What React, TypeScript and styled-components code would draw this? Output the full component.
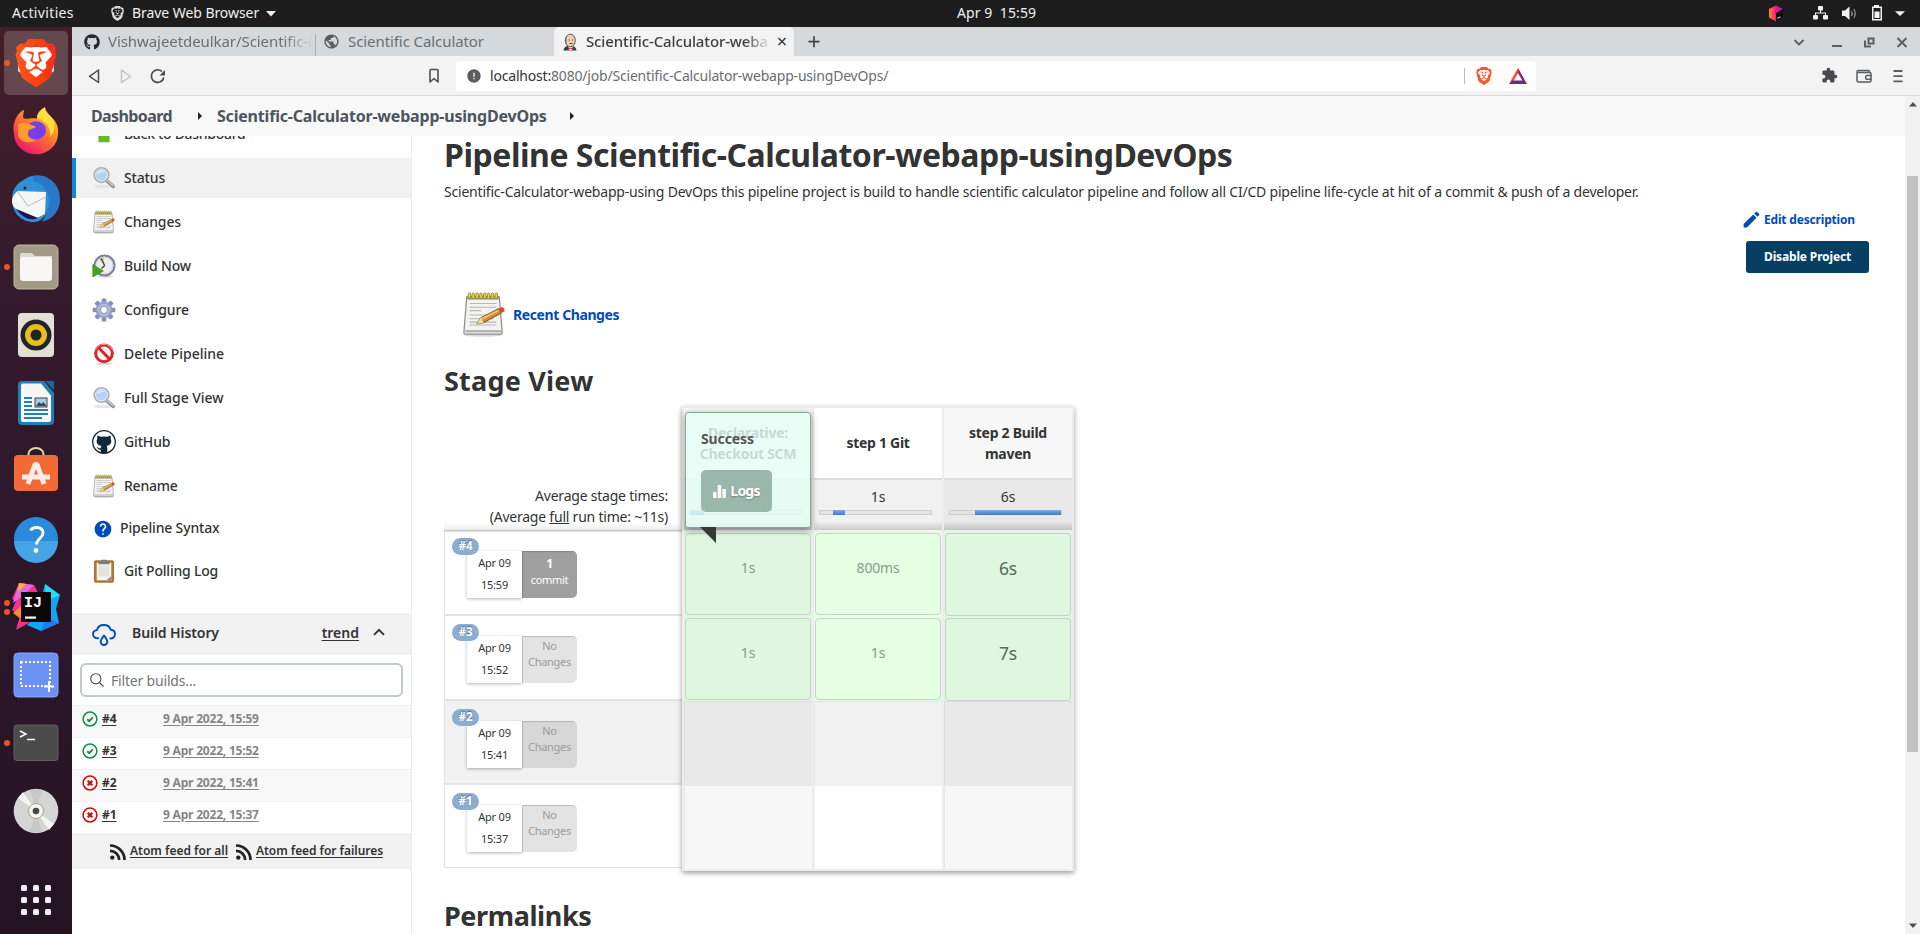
import React from 'react';
import styled, { createGlobalStyle, css } from 'styled-components';
import { SiBrave } from 'react-icons/si';
import { FaGithub } from 'react-icons/fa';
import { MdExtension, MdEdit, MdError, MdHelp, MdPublic } from 'react-icons/md';

const GlobalStyle = createGlobalStyle`
  * { box-sizing: border-box; }
  body {
    margin: 0;
    overflow: hidden;
    background: #fff;
    color: #333;
    font-family: 'Noto Sans', 'Open Sans', sans-serif;
    font-size: 14px;
  }
  svg { display: block; flex: none; }
`;

/* ---------- desktop shell ---------- */

const Screen = styled.div`
  width: 1920px;
  height: 934px;
  display: flex;
  flex-direction: column;
  overflow: hidden;
`;

const TopBar = styled.header`
  height: 27px;
  flex: none;
  display: grid;
  grid-template-columns: 1fr auto 1fr;
  align-items: center;
  background: #1d1d1d;
  color: #f0f0f0;
  font-size: 14px;
  line-height: 25px;
  white-space: pre;
`;

const TopLeft = styled.div`
  display: flex;
  align-items: center;
  padding-left: 12px;
`;

const Activities = styled.span`
  width: 98px;
  padding-bottom: 2px;
  letter-spacing: 0.36px;
`;

const AppName = styled.span`
  margin: 0 7px 0 7px;
  padding-bottom: 2px;
  letter-spacing: -0.06px;
`;

const Clock = styled.div`
  padding: 0 0 2px 73px;
  letter-spacing: 0.1px;
`;

const Tray = styled.div`
  display: flex;
  justify-content: flex-end;
  padding-right: 10px;
`;

const Desktop = styled.div`
  flex: 1;
  display: flex;
  min-height: 0;
`;

const Dock = styled.nav`
  width: 72px;
  flex: none;
  display: flex;
  flex-direction: column;
  gap: 4px;
  padding: 4px 4px 0;
  background: linear-gradient(#441e29 0%, #351b2c 28%, #2d172b 60%, #241421 100%);
`;

const DockItem = styled.div<{ $active?: boolean; $last?: boolean }>`
  position: relative;
  width: 64px;
  height: 64px;
  border-radius: 5px;
  margin-top: ${p => (p.$last ? '21px' : '0')};
  background: ${p => (p.$active ? '#65474f' : 'transparent')};
`;

const Dots = styled.div`
  position: absolute;
  left: 0;
  top: 0;
  height: 64px;
  display: flex;
  flex-direction: column;
  justify-content: center;
  gap: 3px;
`;

const Dot = styled.i`
  width: 6px;
  height: 6px;
  border-radius: 50%;
  background: #e95420;
`;

/* ---------- browser chrome ---------- */

const Browser = styled.div`
  flex: 1;
  min-width: 0;
  display: flex;
  flex-direction: column;
`;

const TabStrip = styled.div`
  height: 29px;
  flex: none;
  display: flex;
  align-items: center;
  background: #d5d9dc;
`;

const Tab = styled.div<{ $active?: boolean; $w: number; $pad: number }>`
  width: ${p => p.$w}px;
  height: 29px;
  padding-left: ${p => p.$pad}px;
  display: flex;
  align-items: center;
  font-size: 15px;
  color: #6b6e71;
  ${p =>
    p.$active &&
    css`
      background: #f3f3f3;
      color: #3b3d3f;
      font-weight: 500;
      border-radius: 5px 5px 0 0;
    `}
`;

const TabTitle = styled.span<{ $w: number; $fade?: boolean; $ls: number }>`
  width: ${p => p.$w}px;
  padding: 0 0 2px 8px;
  overflow: hidden;
  white-space: nowrap;
  letter-spacing: ${p => p.$ls}px;
  ${p =>
    p.$fade &&
    css`
      mask-image: linear-gradient(90deg, #000 86%, transparent 100%);
    `}
`;

const TabDivider = styled.i`
  width: 1px;
  height: 22px;
  margin-top: 7px;
  background: #a9adb0;
`;

const WindowControls = styled.div`
  margin-left: auto;
  width: 130px;
`;

const Toolbar = styled.div`
  height: 40px;
  flex: none;
  display: flex;
  align-items: center;
  background: #f3f3f3;
  border-bottom: 1px solid #d6d8da;
`;

const NavButtons = styled.div`
  width: 384px;
`;

const AddressBar = styled.div`
  width: 1080px;
  height: 30px;
  display: flex;
  align-items: center;
  padding-left: 10px;
  border-radius: 4px;
  background: #fff;
  color: #6a6d70;
  font-size: 14px;
  letter-spacing: -0.19px;
`;

const Url = styled.span`
  margin-left: 8px;
  b { font-weight: 400; color: #333; }
`;

const Shields = styled.div`
  margin-left: auto;
`;

const ToolbarEnd = styled.div`
  margin: 0 16px 0 auto;
`;

/* ---------- page ---------- */

const Viewport = styled.div`
  flex: 1;
  min-height: 0;
  display: flex;
`;

const Page = styled.div`
  flex: 1;
  min-width: 0;
  display: flex;
  flex-direction: column;
  background: #fff;
`;

const Breadcrumbs = styled.div`
  height: 40px;
  flex: none;
  display: flex;
  align-items: center;
  padding-left: 19px;
  background: #f8f8f8;
  color: #4d545d;
  font-size: 16px;
  font-weight: 700;
`;

const Crumb = styled.span<{ $w: number; $ls: number }>`
  width: ${p => p.$w}px;
  white-space: nowrap;
  letter-spacing: ${p => p.$ls}px;
`;

const CrumbArrow = styled.i`
  width: 0;
  height: 0;
  border: 4px solid transparent;
  border-left-color: #222;
  border-right: 0;
  margin: 0 15px 0 25px;
`;

const ScrollTrack = styled.div`
  width: 15px;
  flex: none;
  display: flex;
  flex-direction: column;
  align-items: center;
  background: #f1f1f1;
  padding: 6px 0;
`;

const ScrollThumb = styled.div`
  width: 11px;
  height: 576px;
  margin-top: 69px;
  margin-bottom: auto;
  background: #c1c1c1;
`;

const Columns = styled.div`
  flex: 1;
  min-height: 0;
  display: flex;
  overflow: hidden;
`;

const SidePanel = styled.aside`
  width: 340px;
  flex: none;
  border-right: 1px solid #ededed;
`;

const TaskList = styled.div`
  display: flex;
  flex-direction: column;
  gap: 4px;
  margin-top: -22px;
`;

const Task = styled.div<{ $active?: boolean; $small?: boolean; $ls?: number }>`
  height: ${p => (p.$small ? 37 : 40)}px;
  display: flex;
  align-items: center;
  gap: ${p => (p.$small ? 7 : 8)}px;
  padding-left: ${p => (p.$small ? 17 : 16)}px;
  border-left: 4px solid ${p => (p.$active ? '#0b8adb' : 'transparent')};
  background: ${p => (p.$active ? '#f1f1f1' : 'transparent')};
  font-weight: 500;
  letter-spacing: ${p => p.$ls ?? -0.15}px;
`;

const TaskLabel = styled.span`
  padding-bottom: 2px;
`;

const HistoryHead = styled.div`
  height: 42px;
  margin-top: 22px;
  display: flex;
  align-items: center;
  padding: 0 26px 4px 20px;
  background: #f1f1f1;
  font-weight: 600;
  svg:first-child { margin-top: 5px; }
`;

const HistoryTitle = styled.span`
  margin-left: 16px;
  letter-spacing: -0.08px;
`;

const Trend = styled.a`
  margin-left: auto;
  margin-right: 14px;
  text-decoration: underline;
  text-underline-offset: 2px;
`;

const FilterBox = styled.div`
  width: 323px;
  height: 34px;
  margin: 8px 0 8px 8px;
  display: flex;
  align-items: center;
  gap: 7px;
  padding-left: 8px;
  border: 2px solid #bfcacf;
  border-radius: 6px;
  color: #757575;
  letter-spacing: -0.18px;
`;

const BuildRow = styled.div<{ $odd?: boolean }>`
  height: 32px;
  display: flex;
  padding: 5px 0 0 10px;
  border-top: 1px solid #f1f1f1;
  background: ${p => (p.$odd ? '#f8f8f8' : '#fff')};
  font-size: 12px;
  font-weight: 700;
  line-height: 16px;
`;

const BuildNo = styled.a`
  width: 61px;
  margin-left: 4px;
  letter-spacing: -0.1px;
  text-decoration: underline;
  text-underline-offset: 2px;
`;

const BuildDate = styled.a`
  color: #858585;
  letter-spacing: -0.2px;
  text-decoration: underline;
  text-underline-offset: 2px;
`;

const Feeds = styled.div`
  height: 36px;
  display: flex;
  align-items: center;
  padding-left: 38px;
  background: #f1f1f1;
  font-size: 12px;
  font-weight: 600;
  white-space: nowrap;
  svg { margin-top: 2px; }
`;

const Feed = styled.a<{ $w: number; $ls: number }>`
  width: ${p => p.$w}px;
  margin: 0 8px 2px 4px;
  letter-spacing: ${p => p.$ls}px;
  text-decoration: underline;
  text-underline-offset: 2px;
`;

const Main = styled.main`
  flex: 1;
  min-width: 0;
  display: flex;
  flex-direction: column;
  padding-left: 32px;
`;

const Title = styled.h1`
  margin: 0;
  font-size: 32px;
  line-height: 38px;
  font-weight: 700;
  letter-spacing: -0.47px;
`;

const Description = styled.p`
  margin: 8px 0 7px;
  line-height: 20px;
  letter-spacing: -0.205px;
`;

const PageActions = styled.div`
  width: 161px;
  align-self: flex-end;
`;

const EditLink = styled.a`
  height: 20px;
  display: flex;
  align-items: center;
  gap: 2px;
  color: #004bb8;
  font-size: 12px;
  font-weight: 700;
  letter-spacing: -0.18px;
  svg { margin-left: -3px; }
`;

const DisableButton = styled.button`
  display: block;
  width: 123px;
  height: 32px;
  margin: 12px 0 0 2px;
  padding: 0 0 1px;
  border: 0;
  border-radius: 3px;
  background: #073f63;
  color: #fff;
  font: 700 12px 'Noto Sans', sans-serif;
  letter-spacing: -0.15px;
`;

const RecentChanges = styled.a`
  height: 48px;
  margin: 17px 0 26px;
  padding-left: 17px;
  display: flex;
  align-items: center;
  gap: 6px;
  color: #004bb8;
  font-weight: 700;
  letter-spacing: -0.4px;
`;

const SectionTitle = styled.h2<{ $ls: number }>`
  margin: 0;
  font-size: 27px;
  line-height: 34px;
  font-weight: 700;
  letter-spacing: ${p => p.$ls}px;
`;

/* ---------- stage view ---------- */

const StageView = styled.section`
  display: flex;
  margin: 8px 0 28px;
  height: 465px;
`;

const RunColumn = styled.div`
  width: 238px;
`;

const AverageLabel = styled.div`
  height: 125px;
  padding: 79px 14px 0 0;
  text-align: right;
  line-height: 21px;
  letter-spacing: -0.22px;
  border-bottom: 1px solid #c4c4c4;
  background: linear-gradient(#fff 94%, #ececec);
`;

const Run = styled.div<{ $h: number; $pad: number; $shaded?: boolean }>`
  position: relative;
  height: ${p => p.$h}px;
  padding: ${p => p.$pad}px 0 0 22px;
  display: flex;
  align-items: flex-start;
  border: 1px solid #e3e3e3;
  border-width: 1px 0 1px 1px;
  background: ${p => (p.$shaded ? '#f1f1f1' : '#fff')};
`;

const RunBadge = styled.span<{ $top: number }>`
  position: absolute;
  left: 7px;
  top: ${p => p.$top}px;
  width: 27px;
  height: 17px;
  border-radius: 9px;
  background: #8aadd1;
  color: #fff;
  text-align: center;
  font-size: 11.5px;
  line-height: 16px;
  font-weight: 700;
  text-shadow: 0 -1px 1px rgba(0, 0, 0, 0.4);
`;

const RunDate = styled.div`
  width: 55px;
  height: 47px;
  padding-top: 1px;
  background: #fff;
  box-shadow: 0 1px 3px rgba(0, 0, 0, 0.3);
  text-align: center;
  font-size: 11px;
  line-height: 22px;
  letter-spacing: -0.2px;
`;

const Commits = styled.div<{ $has?: boolean; $dark?: boolean }>`
  width: 55px;
  height: 47px;
  padding-top: ${p => (p.$has ? 5 : 2)}px;
  border-radius: 0 5px 5px 0;
  background: ${p => (p.$has ? '#9f9f9f' : p.$dark ? '#d7d7d7' : '#e3e3e3')};
  box-shadow: inset 1px 1px 1px rgba(0, 0, 0, 0.18);
  color: ${p => (p.$has ? '#fff' : '#9a9a9a')};
  text-align: center;
  font-size: 11px;
  line-height: 16px;
  letter-spacing: -0.3px;
  b { font-size: 12px; }
`;

const StageGrid = styled.div`
  position: relative;
  width: 392px;
  height: 465px;
  padding: 2px;
  display: grid;
  grid-template-columns: repeat(3, 128px);
  grid-template-rows: 70px 53px 85px 85px 84px 84px;
  column-gap: 2px;
  background: #ededed;
  box-shadow: 0 2px 5px rgba(0, 0, 0, 0.4);
`;

const StageHead = styled.div<{ $odd?: boolean }>`
  padding-bottom: 1px;
  display: flex;
  align-items: center;
  justify-content: center;
  text-align: center;
  white-space: pre;
  line-height: 21px;
  font-weight: 700;
  letter-spacing: -0.28px;
  background: ${p => (p.$odd ? '#f7f7f7' : '#fff')};
`;

const StageAverage = styled.div<{ $odd?: boolean }>`
  padding-top: 7px;
  border-top: 2px solid #dedede;
  border-bottom: 1px solid #f0f0f0;
  line-height: 20px;
  text-align: center;
  background: linear-gradient(transparent 82%, rgba(0, 0, 0, 0.16)), ${p => (p.$odd ? '#e9e9e9' : '#f1f1f1')};
`;

const Meter = styled.div`
  width: 113px;
  height: 5px;
  margin: 3px 0 0 5px;
  display: flex;
  background: #e4e4e4;
  border: 1px solid #cdcdcd;
`;

const MeterBar = styled.i<{ $from: number; $len: number }>`
  height: 5px;
  margin: -1px 0 0 ${p => p.$from}px;
  width: ${p => p.$len}px;
  background: linear-gradient(#86abdc, #4178c4);
`;

const Cell = styled.div<{ $odd?: boolean; $kind: 'ok' | 'shaded' | 'plain' }>`
  padding: 2px 1px 1px;
  background: ${p =>
    p.$kind === 'ok' ? (p.$odd ? '#def7de' : '#e5ffe3')
    : p.$kind === 'shaded' ? (p.$odd ? '#e9e9e9' : '#f1f1f1')
    : p.$odd ? '#f7f7f7' : '#fff'};
  ${p =>
    p.$kind !== 'ok' &&
    css`
      border: 1px solid rgba(0, 0, 0, 0.05);
      border-width: 1px 0 0 1px;
    `}
`;

const Result = styled.div<{ $slow?: boolean }>`
  height: ${p => (p.$slow ? 83 : 82)}px;
  padding-bottom: 14px;
  display: flex;
  align-items: center;
  justify-content: center;
  border: 1px solid rgba(200, 190, 205, 0.75);
  border-radius: 4px;
  color: ${p => (p.$slow ? '#5b665b' : '#8b998b')};
  font-size: ${p => (p.$slow ? 17.5 : 14)}px;
  letter-spacing: -0.2px;
`;

const Popover = styled.div`
  position: absolute;
  left: 3px;
  top: 6px;
  width: 126px;
  height: 116px;
  padding: 16px 0 0 15px;
  border: 1px solid #7bb08e;
  border-radius: 3px;
  background: rgba(229, 255, 246, 0.82);
  box-shadow: 0 2px 7px rgba(0, 0, 0, 0.4);
  color: #555;
  font-weight: 700;
  line-height: 20px;
  letter-spacing: -0.1px;
`;

const PopoverTail = styled.i`
  position: absolute;
  left: 14px;
  top: 114px;
  width: 16px;
  height: 16px;
  background: #333b36;
  clip-path: polygon(0 0, 100% 0, 100% 100%);
`;

const LogsButton = styled.div`
  width: 71px;
  height: 42px;
  margin-top: 21px;
  display: flex;
  align-items: center;
  justify-content: center;
  gap: 4px;
  border-radius: 5px;
  background: #99b8ab;
  color: #fff;
  letter-spacing: -0.8px;
  text-shadow: 0 1px 2px rgba(0, 0, 0, 0.3);
`;

/* ---------- icons ---------- */

const Magnifier = () => (
  <svg width="24" height="24" viewBox="0 0 24 24">
    <ellipse cx="11" cy="20.5" rx="9" ry="1.8" fill="#e4e4e4" />
    <path d="M14.500 14.500l6.700 5.800" stroke="#8c8c8c" strokeWidth="3.600" strokeLinecap="round" />
    <path d="M15 14.500l6 5.200" stroke="#c9c9c9" strokeWidth="1.600" strokeLinecap="round" />
    <circle cx="9.500" cy="9" r="7.200" fill="#b7d2f4" stroke="#a8adb3" strokeWidth="1.800" />
    <circle cx="9.500" cy="9" r="6" fill="none" stroke="#e9f0fa" strokeWidth="0.900" />
    <path d="M5 8.500a4.600 4.600 0 0 1 8-2.800c-3 .2-5.500 1.200-8 2.800z" fill="#dfebfb" />
  </svg>
);

const Notepad = ({ size = 24 }: { size?: number }) => (
  <svg width={size} height={size} viewBox="0 0 48 48">
    <ellipse cx="23" cy="46" rx="20" ry="1.800" fill="#dcdcdc" />
    <path d="M6 6h34l3 37.500a1.500 1.500 0 0 1-1.500 1.500h-37a1.500 1.500 0 0 1-1.500-1.500z" fill="#f3f3f1" stroke="#8d8d8b" strokeWidth="1.300" />
    <path d="M6.500 5h33v4h-33z" fill="#9a9890" />
    <path d="M4.500 42h37.500" stroke="#a9a9a7" strokeWidth="2" />
    <path d="M9 13h28M9 17h28M9 20.500h12M9 25h28M9 29h25M9 32.500h28M9 35.500h28" stroke="#b5b5b3" strokeWidth="1.200" />
    {[9, 13, 17, 21, 25, 29, 33, 37].map(x => (
      <rect key={x} x={x - 1.5} y="2" width="2.600" height="6" rx="1.300" fill="#e8d43a" stroke="#877515" strokeWidth="0.700" />
    ))}
    <path d="M16.500 34.500l4-6.500 18.500-9.500 3.200 4.500-18.500 10z" fill="#cf8d33" stroke="#6f4a14" strokeWidth="0.900" />
    <path d="M20.500 28.500l18-9 1.200 1.500-18 9.500z" fill="#edbd6e" />
    <path d="M16.500 34.500l4-6.500 3.200 5z" fill="#f0dcb3" />
    <path d="M39 18.500l3.500-1.800q3.200 1 3 4.300l-3.300 2z" fill="#e0483c" />
  </svg>
);

const BuildNow = () => (
  <svg width="24" height="24" viewBox="0 0 24 24">
    <ellipse cx="13" cy="22.500" rx="8" ry="1" fill="#d6d6d6" />
    <circle cx="12.500" cy="11.500" r="10" fill="#ecedf0" stroke="#7f7f9e" strokeWidth="2" />
    <circle cx="12.500" cy="11.500" r="8.400" fill="none" stroke="#c9c9da" strokeWidth="0.800" />
    <path d="M12.500 11.500L7 4.500l4.500-1.300z" fill="#dfc257" />
    <path d="M12.700 11.500L9 4.500M12.700 11.500l-3.200 3" stroke="#3d3d3d" strokeWidth="1.300" />
    <path d="M.8 10.500v12.500l10.500-6z" fill="#43a612" stroke="#2d7d0b" strokeWidth="0.600" />
  </svg>
);

const Gear = () => (
  <svg width="24" height="24" viewBox="0 0 24 24">
    {[0, 45, 90, 135].map(a => (
      <rect key={a} x="9.700" y="0.600" width="4.600" height="22.800" rx="1" fill="#8391b8" transform={`rotate(${a} 12 12)`} />
    ))}
    <circle cx="12" cy="12" r="8.300" fill="#94a0c4" />
    <circle cx="12" cy="12" r="6.300" fill="#b2bad6" />
    <circle cx="12" cy="12" r="3.600" fill="#fff" stroke="#7583ab" strokeWidth="0.800" />
  </svg>
);

const Forbidden = () => (
  <svg width="24" height="24" viewBox="0 0 24 24">
    <ellipse cx="12" cy="21.700" rx="8.500" ry="1.200" fill="#d5d5d5" />
    <circle cx="12" cy="11.300" r="8.400" fill="#fbf3f3" stroke="#d9252b" strokeWidth="3" />
    <path d="M6.500 5.500l11 11.500" stroke="#d9252b" strokeWidth="3" />
    <path d="M3.200 8.500a9.400 9.400 0 0 1 17.600 0" fill="none" stroke="#ee7f80" strokeWidth="1.200" />
  </svg>
);

const Octocat = () => (
  <svg width="24" height="24" viewBox="0 0 24 24">
    <circle cx="12" cy="12" r="11.300" fill="#fff" stroke="#10283a" strokeWidth="1.300" />
    <path d="M5.500 5.500l3.300 1.200q3.200-.6 6.400 0l3.300-1.200q.7 1.800.1 3.300c1.400 2.500.9 6.300-4.100 7.100.7.700.8 1.400.8 2.500v4.300q-3.300 1-6.600 0v-3c-3 .6-3-1.800-4.200-2.600 1.500-.4 2 1.700 4.200 1.100 0-1 .2-1.600.7-2.300-5-.8-5.500-4.600-4.100-7.100q-.5-1.500.2-3.300z" fill="#10283a" />
  </svg>
);

const Clipboard = () => (
  <svg width="24" height="24" viewBox="0 0 24 24">
    <rect x="2.500" y="1.800" width="19" height="21.400" rx="1" fill="#b37a2c" stroke="#855610" strokeWidth="0.700" />
    <rect x="4.700" y="3.800" width="14.600" height="17.500" fill="#f4f4f3" />
    <rect x="6.500" y="6.500" width="10.500" height="11" fill="#e3e3e2" />
    <path d="M14.500 21.300l4.800-4.300v4.300z" fill="#8e8e8c" />
    <path d="M6.500 5.300v-2.300q0-.7.700-.7h2V.8h5.600v1.500h2q.7 0 .7.700v2.300z" fill="#7a7d7a" />
  </svg>
);

const GreenArrow = () => (
  <svg width="24" height="24" viewBox="0 0 24 24">
    <ellipse cx="12" cy="19.800" rx="8" ry="1.300" fill="#ddd" />
    <path d="M12 1l9 9h-4v9.300H7V10H3z" fill="#5fc31b" stroke="#4a9c12" strokeWidth="0.800" />
  </svg>
);

const RainCloud = () => (
  <svg width="24" height="24" viewBox="0 0 24 24" fill="none" stroke="#004bb8" strokeWidth="1.900" strokeLinecap="round" strokeLinejoin="round">
    <path d="M6.200 15.300C3 15.300 1 13.600 1 11.200c0-2.200 1.600-3.800 4-4.100C5.600 4 8.400 2 12 2c3.300 0 5.800 1.800 6.700 4.800 2.700.1 4.300 2 4.300 4.300 0 2.500-1.900 4.400-4.600 4.400" />
    <path d="M12 12.500c1.500 2.100 3.300 4.300 3.300 6.200a3.300 3.300 0 0 1-6.600 0c0-1.900 1.800-4.100 3.300-6.200z" />
  </svg>
);

const RssWaves = () => (
  <svg width="16" height="16" viewBox="0 0 16 16" fill="none" stroke="#222">
    <circle cx="2.300" cy="13.600" r="2.200" fill="#222" stroke="none" />
    <path d="M0 1.500A14.400 14.400 0 0 1 14.500 16M0 6.800A9.200 9.200 0 0 1 9.200 16" strokeWidth="2.700" />
  </svg>
);

const StatusIcon = ({ ok }: { ok: boolean }) => (
  <svg width="16" height="16" viewBox="0 0 16 16" fill="none" stroke={ok ? '#1a8a4c' : '#d10a12'}>
    <circle cx="8" cy="8" r="6.900" strokeWidth="1.500" />
    {ok ? <path d="M5.200 8.200l2 1.900 3.600-3.700" strokeWidth="2" /> : <path d="M5.700 5.700l4.600 4.600M10.300 5.700l-4.600 4.600" strokeWidth="2.200" />}
  </svg>
);

const Butler = () => (
  <svg width="16" height="18" viewBox="0 0 16 18">
    <path d="M1.500 17.500q.5-4 4-4.500h5q3.500.5 4 4.500z" fill="#27405c" />
    <path d="M6 12h5v4l-2.500 1.500L6 16z" fill="#fff" />
    <ellipse cx="8.300" cy="7.500" rx="5" ry="6.300" fill="#ecd2b1" stroke="#4b433b" strokeWidth="0.900" />
    <path d="M3.300 4.500q-1 2.500 0 5.500l1.200-.5V5z" fill="#6d6a66" />
    <path d="M6.500 7h1.200M10 7h1.200M7.500 10.500h3" stroke="#40352c" strokeWidth="0.900" />
    <path d="M6 14l2.500 1.200L11 14v3l-2.500-1.200L6 17z" fill="#d33833" />
  </svg>
);

const TraySymbols = () => (
  <svg width="144" height="27" viewBox="1766 0 144 27">
    <defs>
      <linearGradient id="tb" x1="0" x2="1"><stop offset="0" stopColor="#fd8a2b" /><stop offset=".5" stopColor="#f3167c" /><stop offset="1" stopColor="#8c2be0" /></linearGradient>
    </defs>
    <path d="M1776 5.500l7 3.500v8.500l-7 4-7-4V9z" fill="url(#tb)" />
    <path d="M1776 13l7-4v8.500l-7 4z" fill="#0a0a0a" />
    <path d="M1777.500 18.300l3-1.500" stroke="#fff" strokeWidth="1" />
    <g fill="#f2f2f2">
      <rect x="1818" y="6" width="5" height="4.500" rx="1" />
      <rect x="1813" y="15" width="5" height="4.500" rx="1" />
      <rect x="1823" y="15" width="5" height="4.500" rx="1" />
      <path d="M1820 10h1v2.500h5v3h-1v-2h-9v2h-1v-3h5z" />
      <path d="M1842 10.500h3l4.500-4v13.500l-4.500-4h-3z" />
      <path d="M1872 6.500h2V5h5v1.500h3v14h-10z M1873.500 8v11h7V8z" fillRule="evenodd" />
      <rect x="1874.500" y="11.500" width="5" height="6.500" />
      <path d="M1895 11.200h10l-5 4.800z" />
    </g>
    <path d="M1851.500 11q1.500 2.500 0 5M1853.800 9q2.800 4.500 0 9" stroke="#999" strokeWidth="1.100" fill="none" />
  </svg>
);

const WindowSymbols = () => (
  <svg width="130" height="29" viewBox="1790 27 130 29" fill="none" stroke="#5b5e61">
    <path d="M1794.500 40l4.500 4.500 4.500-4.500" strokeWidth="1.800" />
    <path d="M1832 46h10" strokeWidth="2" />
    <path d="M1868.500 38.500h5v5h-5zM1865 40.500v6h6" strokeWidth="2" />
    <path d="M1897.500 38l9 9M1906.500 38l-9 9" strokeWidth="1.900" />
  </svg>
);

const NavSymbols = () => (
  <svg width="384" height="39" viewBox="72 56 384 39" fill="none" strokeLinejoin="round">
    <path d="M98.500 70v12.500l-9-6.200z" stroke="#4b4e51" strokeWidth="1.500" />
    <path d="M121.500 70v12.500l9-6.200z" stroke="#c3c3c3" strokeWidth="1.500" />
    <path d="M162 71.500a6.300 6.300 0 1 0 1.800 6" stroke="#4b4e51" strokeWidth="1.700" />
    <path d="M165 70v5.500h-5.500z" fill="#4b4e51" />
    <path d="M430 70.500q0-1 1-1h6q1 0 1 1v11.500l-4-3.500-4 3.500z" stroke="#4b4e51" strokeWidth="1.600" />
  </svg>
);

const ShieldSymbols = () => (
  <svg width="80" height="30" viewBox="1456 61 80 30">
    <path d="M1464.500 68v16" stroke="#b9b9b9" />
    <path d="M1479 70h10l1 9-6 5-6-5z" fill="#fff" />
    <SiBrave x="1475" y="67" size={18} color="#fb542b" />
    <path d="M1518 71l5 9h-10z" fill="#fff" />
    <path d="M1518 68v5l-4.500 8-4.500 3z" fill="#ff4724" />
    <path d="M1518 68l9 16-4.500-3-4.500-8z" fill="#9e1f63" />
    <path d="M1509 84l3.500-3.500h11l3.500 3.500z" fill="#662d91" />
  </svg>
);

const MenuSymbols = () => (
  <svg width="66" height="39" viewBox="1854 56 66 39" fill="none" stroke="#5b5e61">
    <path d="M1869.500 72v-.5a1 1 0 0 0-1-1h-10a1.500 1.500 0 0 0-1.500 1.500v8.500a1.500 1.500 0 0 0 1.500 1.500h11a1.500 1.500 0 0 0 1.500-1.500v-6.500a1.500 1.500 0 0 0-1.500-1.500h-12" strokeWidth="1.500" />
    <path d="M1871.500 75.500h-4a1.900 1.900 0 0 0 0 3.800h4" strokeWidth="1.400" />
    <path d="M1893.500 71h9M1893.500 76.200h9M1893.500 81.400h9" strokeWidth="1.800" />
  </svg>
);

const dockIcons: React.ReactNode[] = [
  <>
    <path d="M16 16h32l2 24-18 13-18-13z" fill="#fff" />
    <SiBrave x="8" y="8" size={48} style={{ fill: 'url(#brv)' }} />
  </>,
  <g transform="matrix(1 0 0 0.92 0 1)">
    <path d="M14 16c-5 8-5 14-4 21a22 22 0 0 0 44 0c1-10-3-15-8-20-3-3-5-6-5-9-5 3-8 7-8 12-7-1-12 2-14-1 0-3 1-6 1-8-3 1-4 3-6 5z" fill="url(#ffx)" />
    <path d="M41 8c-5 3-8 7-8 12 9 3 14 10 13 20 6-7 6-17 0-23-3-3-5-6-5-9z" fill="#ffde3d" />
    <circle cx="32" cy="33" r="10" fill="#7740e8" />
    <path d="M14 27c4-3 9-2 13 0l5 2c-3 3-8 2-8 7-1 5 4 8 9 7-7 6-17 2-19-4z" fill="#ff9d2c" />
  </g>,
  <>
    <path d="M22 12c10-9 34-2 34 20 0 14-10 22-18 22 4-4 6-12 6-20L28 18z" fill="#2a78c7" />
    <path d="M8 32c0-8 4-15 10-18 5-4 10-5 12-5-2 3-1 4 1 6 8 2 14 9 14 19 0 14-8 21-15 21C16 55 8 45 8 32z" fill="#2f8fd8" />
    <path d="M8 35c0-6 3-9 6-11l28 1-1 22-8 4L12 42q-3-2-4-7z" fill="#f6f6f6" />
    <path d="M13 24l11 15 18-9" fill="none" stroke="#b9b9b9" />
    <path d="M12 42l22 9q-11 5-22-9z" fill="#20104d" />
    <circle cx="21" cy="21" r="1.500" fill="#123" />
  </>,
  <>
    <rect x="10" y="10" width="44" height="44" rx="5" fill="#a29a85" stroke="#bdb7a5" />
    <path d="M16 20q0-2 2-2h10l3 3h17v10H16z" fill="#dedad0" />
    <rect x="16" y="22" width="32" height="24" rx="3" fill="#f8f7f5" />
  </>,
  <>
    <rect x="14" y="10" width="36" height="44" rx="4" fill="#e3dfd5" />
    <circle cx="32" cy="32" r="15.500" fill="#20242b" />
    <circle cx="32" cy="32" r="11" fill="#ecbc1a" />
    <circle cx="32" cy="32" r="5.500" fill="#20242b" />
  </>,
  <>
    <path d="M18 10h22l10 12v28a4 4 0 0 1-4 4H18a4 4 0 0 1-4-4V14a4 4 0 0 1 4-4z" fill="#2180b5" />
    <path d="M41 10h9v9z" fill="#1b6a9e" />
    <path d="M18 12.500h19l10 12V49q0 2-2 2H19q-2 0-2-2V14z" fill="#f7f7f7" />
    <path d="M20 27h8M20 31h8M20 35h8M20 39h24M20 43h24M20 47h18" stroke="#2180b5" strokeWidth="2" />
    <rect x="31" y="27" width="12" height="9" fill="#9fd0ee" stroke="#444" />
    <path d="M32 35l3-4 2.500 2 2-2 3 4z" fill="#444" />
  </>,
  <>
    <path d="M24.500 17v-2a7.500 6 0 0 1 15 0v2" fill="none" stroke="#f4d3b0" strokeWidth="2" />
    <rect x="10" y="16" width="44" height="36" rx="4" fill="#f26a35" />
    <path d="M24 45L31 25.500h2L40 45M18 38h28" fill="none" stroke="#fdeee5" strokeWidth="5" strokeLinejoin="bevel" />
  </>,
  <>
    <circle cx="32" cy="32" r="22" fill="#2a8bdc" />
    <path d="M10 34h44a22 22 0 0 1-44 0z" fill="#45a3e6" />
    <path d="M26.500 23.500q1.500-3 6-3 6.500 0 6.500 5.500c0 5-6.500 5.500-6.500 11.500" fill="none" stroke="#fff" strokeWidth="2.800" />
    <circle cx="32" cy="43.500" r="2.400" fill="#fff" />
  </>,
  <>
    <path d="M15 8l15 2 8 15-8 20-18 10 4-14-8-6 4-9-4-2z" fill="#f5318f" />
    <path d="M15 8l15 2-9 9-12 9z" fill="#e569d9" />
    <path d="M15 8l7 1-8 8z" fill="#fdb33a" />
    <path d="M9 38l10-8-2 14z" fill="#fd8b2c" />
    <path d="M41 9l15 11-4 14 3 14-18 8-14-6 10-10z" fill="#12a5f5" />
    <path d="M41 9l15 11-14 6z" fill="#21dcfd" />
    <path d="M55 48L37 56l6-14z" fill="#1e7cf0" />
    <rect x="17" y="17" width="30" height="30" fill="#0c0708" />
    <rect x="21" y="41.500" width="11" height="2.200" fill="#fff" />
    <text x="20" y="32" fill="#fff" fontFamily="Liberation Mono" fontWeight="700" fontSize="15">IJ</text>
  </>,
  <>
    <rect x="10" y="10" width="44" height="44" rx="4" fill="#6c91f3" stroke="#86a6f8" />
    <path d="M17 19h29v24H17z" fill="none" stroke="#fff" strokeWidth="2" strokeDasharray="2 2" />
    <path d="M45 38v11M40 43.500h10" stroke="#fff" strokeWidth="2" />
  </>,
  <>
    <rect x="10" y="14" width="44" height="35.500" rx="3" fill="#4b4b4b" stroke="#5e5e5e" />
    <path d="M16 20l6 3-6 3M23 28.500h8" fill="none" stroke="#fff" strokeWidth="1.500" />
  </>,
  <>
    <circle cx="32" cy="32" r="22.300" fill="#d5d5d5" />
    <path d="M32 32L14 19l5-6zM32 32l18 13-5 6z" fill="#f5f5f2" />
    <path d="M32 32l-6-21a22 22 0 0 1 12 0zM32 32l-6 21a22 22 0 0 0 12 0z" fill="#c8c8c8" />
    <circle cx="32" cy="32" r="7.500" fill="#f8f6f0" stroke="#aca28c" />
    <circle cx="32" cy="32" r="3.300" fill="#484848" />
  </>,
  <g fill="#f0eeee">
    {[0, 1, 2].flatMap(r => [0, 1, 2].map(c => <rect key={`${r}${c}`} x={17 + c * 12} y={17 + r * 12} width="6" height="6" rx="1.500" />))}
  </g>,
];

const dockDots = [1, 0, 0, 1, 0, 0, 0, 0, 2, 0, 1, 0, 0];

/* ---------- data ---------- */

const tasks: { label: string; icon: React.ReactNode; small?: boolean; active?: boolean; ls?: number }[] = [
  { label: 'Back to Dashboard', icon: <GreenArrow />, ls: -0.3 },
  { label: 'Status', icon: <Magnifier />, active: true },
  { label: 'Changes', icon: <Notepad /> },
  { label: 'Build Now', icon: <BuildNow /> },
  { label: 'Configure', icon: <Gear /> },
  { label: 'Delete Pipeline', icon: <Forbidden />, ls: -0.04 },
  { label: 'Full Stage View', icon: <Magnifier />, ls: -0.05 },
  { label: 'GitHub', icon: <Octocat /> },
  { label: 'Rename', icon: <Notepad />, ls: -0.25 },
  { label: 'Pipeline Syntax', icon: <MdHelp size={20} color="#004bb8" />, small: true, ls: -0.16 },
  { label: 'Git Polling Log', icon: <Clipboard />, ls: -0.21 },
];

const builds = [
  { no: '#4', date: '9 Apr 2022, 15:59', ok: true },
  { no: '#3', date: '9 Apr 2022, 15:52', ok: true },
  { no: '#2', date: '9 Apr 2022, 15:41', ok: false },
  { no: '#1', date: '9 Apr 2022, 15:37', ok: false },
];

const runs: { no: string; time: string; h: number; pad: number; commits?: boolean; shaded?: boolean; cells?: string[] }[] = [
  { no: '#4', time: '15:59', h: 84, pad: 19, commits: true, cells: ['1s', '800ms', '6s'] },
  { no: '#3', time: '15:52', h: 85, pad: 20, cells: ['1s', '1s', '7s'] },
  { no: '#2', time: '15:41', h: 84, pad: 20, shaded: true },
  { no: '#1', time: '15:37', h: 84, pad: 20 },
];

const stages = [
  { name: 'Declarative:\nCheckout SCM', avg: '1s', from: 0, len: 14 },
  { name: 'step 1 Git', avg: '1s', from: 13, len: 12 },
  { name: 'step 2 Build\nmaven', avg: '6s', from: 25, len: 87 },
];

export default function App() {
  return (
    <Screen>
      <GlobalStyle />
      <TopBar>
        <TopLeft>
          <Activities>Activities</Activities>
          <SiBrave size={15} color="#d6d6d6" />
          <AppName>Brave Web Browser</AppName>
          <svg width="10" height="6" viewBox="0 0 10 6"><path d="M0 0h10L5 5.500z" fill="#f0f0f0" /></svg>
        </TopLeft>
        <Clock>Apr 9  15:59</Clock>
        <Tray><TraySymbols /></Tray>
      </TopBar>
      <Desktop>
        <Dock>
          {dockIcons.map((icon, i) => (
            <DockItem key={i} $active={i === 0} $last={i === 12}>
              <svg width="64" height="64" viewBox="0 0 64 64">
                <defs>
                  <linearGradient id="brv"><stop offset="0" stopColor="#ff5a14" /><stop offset="1" stopColor="#fb2a12" /></linearGradient>
                  <linearGradient id="ffx" x1="1" y1="0" x2="0.300" y2="1"><stop offset="0" stopColor="#ffe63a" /><stop offset="0.450" stopColor="#ff8a25" /><stop offset="1" stopColor="#f0146c" /></linearGradient>
                </defs>
                {icon}
              </svg>
              <Dots>{Array.from({ length: dockDots[i] }, (_, d) => <Dot key={d} />)}</Dots>
            </DockItem>
          ))}
        </Dock>
        <Browser>
          <TabStrip>
            <Tab $w={243} $pad={12}>
              <FaGithub size={16} color="#24292e" />
              <TabTitle $w={213} $ls={-0.07} $fade>Vishwajeetdeulkar/Scientific-C</TabTitle>
            </Tab>
            <TabDivider />
            <Tab $w={238} $pad={7}>
              <MdPublic size={17} color="#5b5e61" />
              <TabTitle $w={150} $ls={-0.08}>Scientific Calculator</TabTitle>
            </Tab>
            <Tab $w={240} $pad={8} $active>
              <Butler />
              <TabTitle $w={193} $ls={-0.13} $fade>Scientific-Calculator-weba</TabTitle>
              <svg width="20" height="20" viewBox="0 0 20 20"><path d="M7.500 6l7 7M14.500 6l-7 7" stroke="#3f4245" strokeWidth="1.600" /></svg>
            </Tab>
            <svg width="40" height="29" viewBox="0 0 40 29"><path d="M14.500 14.700h11M20 9.200v11" stroke="#3f4245" strokeWidth="1.700" /></svg>
            <WindowControls><WindowSymbols /></WindowControls>
          </TabStrip>
          <Toolbar>
            <NavButtons><NavSymbols /></NavButtons>
            <AddressBar>
              <MdError size={16} color="#5b5e61" />
              <Url><b>localhost:</b>8080/job/Scientific-Calculator-webapp-usingDevOps/</Url>
              <Shields><ShieldSymbols /></Shields>
            </AddressBar>
            <ToolbarEnd><MdExtension size={17} color="#47494c" /></ToolbarEnd>
            <MenuSymbols />
          </Toolbar>
          <Viewport>
            <Page>
              <Breadcrumbs>
                <Crumb $w={82} $ls={-0.6}>Dashboard</Crumb>
                <CrumbArrow />
                <Crumb $w={328} $ls={-0.2}>Scientific-Calculator-webapp-usingDevOps</Crumb>
                <CrumbArrow />
              </Breadcrumbs>
              <Columns>
                <SidePanel>
                  <TaskList>
                    {tasks.map(t => (
                      <Task key={t.label} $active={t.active} $small={t.small} $ls={t.ls}>
                        {t.icon}
                        <TaskLabel>{t.label}</TaskLabel>
                      </Task>
                    ))}
                  </TaskList>
                  <HistoryHead>
                    <RainCloud />
                    <HistoryTitle>Build History</HistoryTitle>
                    <Trend>trend</Trend>
                    <svg width="12" height="8" viewBox="0 0 12 8"><path d="M1 6.800L6 1.800l5 5" fill="none" stroke="#333" strokeWidth="1.900" /></svg>
                  </HistoryHead>
                  <FilterBox>
                    <svg width="14" height="14" viewBox="0 0 14 14" fill="none" stroke="#4a4a4a" strokeWidth="1.100"><circle cx="5.800" cy="5.800" r="5.100" /><path d="M9.500 9.500l4 4" /></svg>
                    Filter builds...
                  </FilterBox>
                  {builds.map((b, i) => (
                    <BuildRow key={b.no} $odd={i % 2 === 0}>
                      <StatusIcon ok={b.ok} />
                      <BuildNo>{b.no}</BuildNo>
                      <BuildDate>{b.date}</BuildDate>
                    </BuildRow>
                  ))}
                  <Feeds>
                    <RssWaves />
                    <Feed $w={98} $ls={0}>Atom feed for all</Feed>
                    <RssWaves />
                    <Feed $w={128} $ls={-0.05}>Atom feed for failures</Feed>
                  </Feeds>
                </SidePanel>
                <Main>
                  <Title>Pipeline Scientific-Calculator-webapp-usingDevOps</Title>
                  <Description>
                    Scientific-Calculator-webapp-using DevOps this pipeline project is build to handle scientific calculator pipeline and follow all CI/CD pipeline life-cycle at hit of a commit &amp; push of a developer.
                  </Description>
                  <PageActions>
                    <EditLink><MdEdit size={21} />Edit description</EditLink>
                    <DisableButton>Disable Project</DisableButton>
                  </PageActions>
                  <RecentChanges><Notepad size={46} />Recent Changes</RecentChanges>
                  <SectionTitle $ls={0.22}>Stage View</SectionTitle>
                  <StageView>
                    <RunColumn>
                      <AverageLabel>
                        Average stage times:<br />(Average <u>full</u> run time: ~11s)
                      </AverageLabel>
                      {runs.map((r, i) => (
                        <Run key={r.no} $h={r.h} $pad={r.pad} $shaded={r.shaded}>
                          <RunDate>Apr 09<br />{r.time}</RunDate>
                          <Commits $has={r.commits} $dark={r.shaded}>
                            {r.commits ? <><b>1</b><br />commit</> : <>No<br />Changes</>}
                          </Commits>
                          <RunBadge $top={i === 0 ? 6 : 8}>{r.no}</RunBadge>
                        </Run>
                      ))}
                    </RunColumn>
                    <StageGrid>
                      {stages.map((s, i) => <StageHead key={s.name} $odd={i % 2 === 0}>{s.name}</StageHead>)}
                      {stages.map((s, i) => (
                        <StageAverage key={s.name} $odd={i % 2 === 0}>
                          {s.avg}
                          <Meter><MeterBar $from={s.from} $len={s.len} /></Meter>
                        </StageAverage>
                      ))}
                      {runs.map(r =>
                        stages.map((s, i) => (
                          <Cell key={r.no + s.name} $odd={i % 2 === 0} $kind={r.cells ? 'ok' : r.shaded ? 'shaded' : 'plain'}>
                            {r.cells && <Result $slow={i === 2}>{r.cells[i]}</Result>}
                          </Cell>
                        )),
                      )}
                      <Popover>
                        Success
                        <LogsButton>
                          <svg width="13" height="13" viewBox="0 0 13 13" fill="#fff"><rect y="7" width="3.500" height="6" rx=".8" /><rect x="4.700" width="3.500" height="13" rx=".8" /><rect x="9.400" y="4" width="3.500" height="9" rx=".8" /></svg>
                          Logs
                        </LogsButton>
                        <PopoverTail />
                      </Popover>
                    </StageGrid>
                  </StageView>
                  <SectionTitle $ls={-0.4}>Permalinks</SectionTitle>
                </Main>
              </Columns>
            </Page>
            <ScrollTrack>
              <svg width="8" height="5" viewBox="0 0 8 5"><path d="M4 0l4 4.500H0z" fill="#505050" /></svg>
              <ScrollThumb />
              <svg width="8" height="5" viewBox="0 0 8 5"><path d="M4 5l4-4.500H0z" fill="#505050" /></svg>
            </ScrollTrack>
          </Viewport>
        </Browser>
      </Desktop>
    </Screen>
  );
}
